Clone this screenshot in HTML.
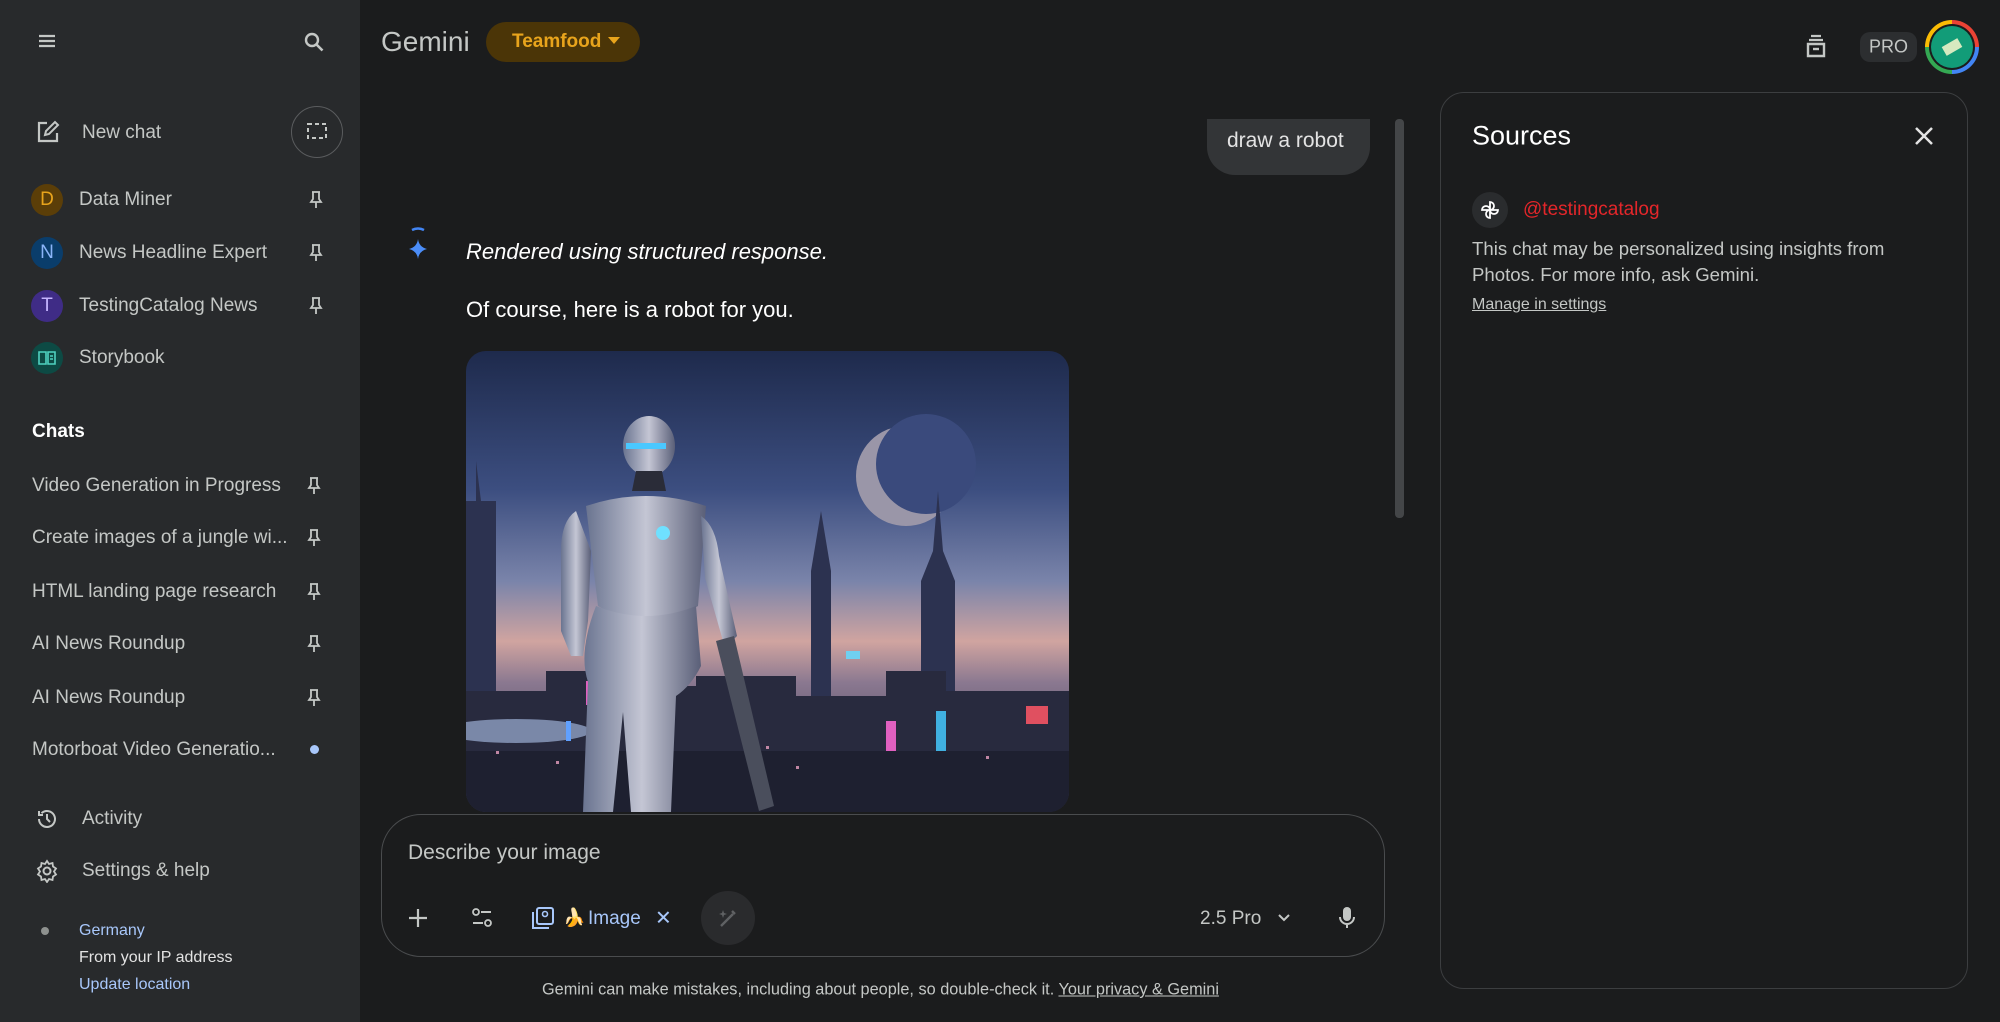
<!DOCTYPE html>
<html><head><meta charset="utf-8"><style>
*{margin:0;padding:0;box-sizing:border-box}
body{width:2000px;height:1022px;background:#1b1c1d;font-family:"Liberation Sans",sans-serif;color:#e3e3e3;position:relative;overflow:hidden}
.a{position:absolute}
.sb{left:0;top:0;width:360px;height:1022px;background:#282a2c}
.t{position:absolute;white-space:nowrap;transform:translateY(-50%)}
.av{position:absolute;width:32px;height:32px;border-radius:50%;transform:translate(-50%,-50%);display:flex;align-items:center;justify-content:center;font-size:19px}
</style></head><body>
<div class="a sb"></div>
<svg class="a" style="left:37px;top:31px" width="20" height="20" viewBox="0 0 20 20"><path d="M2 5h16M2 10h16M2 15h16" stroke="#c4c7c5" stroke-width="2.2"/></svg>
<svg class="a" style="left:302px;top:30px" width="24" height="24" viewBox="0 0 24 24"><circle cx="10" cy="10" r="6" stroke="#c4c7c5" stroke-width="2.4" fill="none"/><path d="M14.5 14.5l6 6" stroke="#c4c7c5" stroke-width="2.6"/></svg>
<svg class="a" style="left:35px;top:119px" width="26" height="26" viewBox="0 0 26 26"><path d="M12 4H4v18h18v-8" stroke="#c4c7c5" stroke-width="2.2" fill="none"/><path d="M10 16l1-4 9-9 3 3-9 9z" stroke="#c4c7c5" stroke-width="2" fill="none"/></svg>
<div class="t" style="left:82px;top:133px;font-size:19px;color:#c4c7c5">New chat</div>
<div class="a" style="left:291px;top:106px;width:52px;height:52px;border-radius:50%;border:1.5px solid #5a5c5e"></div>
<svg class="a" style="left:305px;top:120px" width="24" height="24" viewBox="0 0 24 24"><rect x="3" y="4" width="18" height="14" stroke="#c4c7c5" stroke-width="2" fill="none" stroke-dasharray="4 3"/></svg>
<div class="av" style="left:47px;top:200px;background:#5b3e08;color:#e8a41c">D</div>
<div class="t" style="left:79px;top:200px;font-size:19px;color:#c4c7c5">Data Miner</div>
<div class="av" style="left:47px;top:253px;background:#0a3d6b;color:#8ab4f8">N</div>
<div class="t" style="left:79px;top:253px;font-size:19px;color:#c4c7c5">News Headline Expert</div>
<div class="av" style="left:47px;top:306px;background:#3f2c86;color:#c5b4ff">T</div>
<div class="t" style="left:79px;top:306px;font-size:19px;color:#c4c7c5">TestingCatalog News</div>
<div class="av" style="left:47px;top:358px;background:#0d4a44"><svg width="18" height="14" viewBox="0 0 18 14"><path d="M1 1h7v12H1zM10 1h7v12h-7zM12 5h3M12 8h3" stroke="#4fd1c0" stroke-width="1.6" fill="none"/></svg></div>
<div class="t" style="left:79px;top:358px;font-size:19px;color:#c4c7c5">Storybook</div>
<div class="t" style="left:32px;top:432px;font-size:19px;color:#fff;font-weight:bold">Chats</div>
<div class="t" style="left:32px;top:486px;font-size:19px;color:#c4c7c5">Video Generation in Progress</div>
<div class="t" style="left:32px;top:538px;font-size:19px;color:#c4c7c5">Create images of a jungle wi...</div>
<div class="t" style="left:32px;top:592px;font-size:19px;color:#c4c7c5">HTML landing page research</div>
<div class="t" style="left:32px;top:644px;font-size:19px;color:#c4c7c5">AI News Roundup</div>
<div class="t" style="left:32px;top:698px;font-size:19px;color:#c4c7c5">AI News Roundup</div>
<div class="t" style="left:32px;top:750px;font-size:19px;color:#c4c7c5">Motorboat Video Generatio...</div>
<div class="a" style="left:310px;top:745px;width:9px;height:9px;border-radius:50%;background:#a8c7fa"></div>
<svg width="0" height="0" style="position:absolute"><defs><g id="pin"><path d="M4 1h8M5 1v7l-2 3h10l-2-3V1M8 11v6" stroke="#c4c7c5" stroke-width="1.8" fill="none"/></g></defs></svg>
<svg class="a" style="left:308px;top:191px" width="16" height="18"><use href="#pin"/></svg>
<svg class="a" style="left:308px;top:244px" width="16" height="18"><use href="#pin"/></svg>
<svg class="a" style="left:308px;top:297px" width="16" height="18"><use href="#pin"/></svg>
<svg class="a" style="left:306px;top:477px" width="16" height="18"><use href="#pin"/></svg>
<svg class="a" style="left:306px;top:529px" width="16" height="18"><use href="#pin"/></svg>
<svg class="a" style="left:306px;top:583px" width="16" height="18"><use href="#pin"/></svg>
<svg class="a" style="left:306px;top:635px" width="16" height="18"><use href="#pin"/></svg>
<svg class="a" style="left:306px;top:689px" width="16" height="18"><use href="#pin"/></svg>
<svg class="a" style="left:35px;top:807px" width="24" height="24" viewBox="0 0 24 24"><path d="M4 12a8 8 0 1 0 2.5-5.8M4 4v4h4M12 7v5l3 3" stroke="#c4c7c5" stroke-width="2" fill="none"/></svg>
<div class="t" style="left:82px;top:819px;font-size:19px;color:#c4c7c5">Activity</div>
<svg class="a" style="left:35px;top:859px" width="24" height="24" viewBox="0 0 24 24"><circle cx="12" cy="12" r="3.5" stroke="#c4c7c5" stroke-width="2" fill="none"/><path d="M12 2l2 3 3.5-1 .5 3.5 3 2-2 3 2 3-3 2-.5 3.5-3.5-1-2 3-2-3-3.5 1-.5-3.5-3-2 2-3-2-3 3-2 .5-3.5 3.5 1z" stroke="#c4c7c5" stroke-width="1.8" fill="none"/></svg>
<div class="t" style="left:82px;top:871px;font-size:19px;color:#c4c7c5">Settings &amp; help</div>
<div class="a" style="left:41px;top:927px;width:8px;height:8px;border-radius:50%;background:#8e918f"></div>
<div class="t" style="left:79px;top:931px;font-size:16px;color:#a8c7fa">Germany</div>
<div class="t" style="left:79px;top:958px;font-size:16px;color:#e3e3e3">From your IP address</div>
<div class="t" style="left:79px;top:985px;font-size:16px;color:#a8c7fa">Update location</div>

<div class="t" style="left:381px;top:42px;font-size:28px;color:#c4c7c5">Gemini</div>
<div class="a" style="left:486px;top:22px;width:154px;height:40px;border-radius:20px;background:#4b3507"></div>
<div class="t" style="left:512px;top:42px;font-size:19px;color:#e8a41c;font-weight:600">Teamfood</div>
<svg class="a" style="left:608px;top:37px" width="12" height="8"><path d="M0 0h12L6 7z" fill="#e8a41c"/></svg>
<svg class="a" style="left:1804px;top:34px" width="24" height="26" viewBox="0 0 24 26"><path d="M7 2h10M5 6h14" stroke="#c4c7c5" stroke-width="2.2"/><path d="M4 10h16v12H4z" stroke="#c4c7c5" stroke-width="2.4" fill="none"/><path d="M9 15h6" stroke="#c4c7c5" stroke-width="2.4"/></svg>
<div class="a" style="left:1860px;top:32px;width:57px;height:30px;border-radius:10px;background:#2c2e30"></div>
<div class="t" style="left:1869px;top:47px;font-size:18px;color:#c4c7c5">PRO</div>
<div class="a" style="left:1925px;top:20px;width:54px;height:54px;border-radius:50%;background:conic-gradient(#ea4335 0 25%,#4285f4 25% 50%,#34a853 50% 75%,#fbbc04 75% 100%)"></div>
<div class="a" style="left:1929px;top:24px;width:46px;height:46px;border-radius:50%;background:#1b1c1d"></div>
<div class="a" style="left:1931px;top:26px;width:42px;height:42px;border-radius:50%;background:#129c78"></div>
<div class="a" style="left:1943px;top:42px;width:18px;height:10px;background:#d6e9c0;transform:rotate(-30deg)"></div>

<div class="a" style="left:1207px;top:100px;width:163px;height:75px;border-radius:0 0 28px 28px;background:#333537"></div>
<div class="a" style="left:381px;top:80px;width:1030px;height:39px;background:#1b1c1d"></div>
<div class="t" style="left:1227px;top:141px;font-size:21px;color:#e3e3e3">draw a robot</div>
<div class="a" style="left:1395px;top:119px;width:9px;height:399px;border-radius:4px;background:#444648"></div>
<svg class="a" style="left:405px;top:226px" width="26" height="36" viewBox="0 0 26 36"><path d="M7 4q6-3 12 0" stroke="#4285f4" stroke-width="2.5" fill="none"/><path d="M13 13q1 8 9 10q-8 2-9 10q-1-8-9-10q8-2 9-10z" fill="#4b8df8"/></svg>
<div class="t" style="left:466px;top:252px;font-size:22px;font-style:italic;color:#fff">Rendered using structured response.</div>
<div class="t" style="left:466px;top:310px;font-size:22px;color:#fff">Of course, here is a robot for you.</div>
<svg class="a" style="left:466px;top:351px;border-radius:20px" width="603" height="461" viewBox="0 0 603 461">
<defs><linearGradient id="sky" x1="0" y1="0" x2="0" y2="1"><stop offset="0" stop-color="#1e2a4c"/><stop offset=".3" stop-color="#3c4e80"/><stop offset=".5" stop-color="#7a84aa"/><stop offset=".63" stop-color="#d0a4a0"/><stop offset=".72" stop-color="#8a7890"/><stop offset="1" stop-color="#2a2c40"/></linearGradient>
<linearGradient id="met" x1="0" y1="0" x2="1" y2="0"><stop offset="0" stop-color="#6a7490"/><stop offset=".5" stop-color="#c4c6d4"/><stop offset="1" stop-color="#5a5f78"/></linearGradient></defs>
<rect width="603" height="461" fill="url(#sky)"/>
<circle cx="440" cy="125" r="50" fill="#9a96a8"/><circle cx="460" cy="113" r="50" fill="#3a4a7c"/>
<path d="M0 461V150h10v-40l5 40h15v311zM345 461V220l10-60 10 60v241zM455 461V230l12-30 5-60 5 60 12 30v231z" fill="#2c3250"/>
<path d="M0 461V340h80v-20h60v15h90v-10h100v20h90v-25h60v20h123v161z" fill="#282a3e"/>
<path d="M0 461V400h603v61z" fill="#1e2030"/>
<ellipse cx="50" cy="380" rx="75" ry="12" fill="#7a88a8"/>
<g fill="#e8a0c0" opacity=".8"><rect x="30" y="400" width="3" height="3"/><rect x="90" y="410" width="3" height="3"/><rect x="300" y="395" width="3" height="3"/><rect x="330" y="415" width="3" height="3"/><rect x="520" y="405" width="3" height="3"/></g>
<rect x="120" y="330" width="8" height="24" fill="#e060c0"/><rect x="470" y="360" width="10" height="40" fill="#40b0e0"/><rect x="420" y="370" width="10" height="30" fill="#e060c0"/><rect x="560" y="355" width="22" height="18" fill="#e05060"/><rect x="380" y="300" width="14" height="8" fill="#70d0f0"/><rect x="100" y="370" width="5" height="20" fill="#60a0ff"/>
<ellipse cx="183" cy="95" rx="26" ry="30" fill="url(#met)"/>
<rect x="160" y="92" width="40" height="6" fill="#4ac8ff"/>
<path d="M170 120l26 0 4 20h-34z" fill="#2a2c38"/>
<path d="M120 155q60-20 120 0l-8 100q-50 30-100 0z" fill="url(#met)"/>
<circle cx="197" cy="182" r="7" fill="#6fe0ff"/>
<path d="M110 160q-15 10-15 40v80l10 25h12l5-35 3-70z" fill="url(#met)"/>
<path d="M235 165q15 10 18 40l18 80-12 12-20-70z" fill="url(#met)"/>
<path d="M130 255q50 20 100 0l5 60q-10 20-25 30l-5 116h-40l-8-100-10 100h-30l5-130q-10-30 8-76z" fill="url(#met)"/>
<path d="M250 290l18-5 40 170-15 5z" fill="#4a4e5c"/>
</svg>

<div class="a" style="left:381px;top:814px;width:1004px;height:143px;border-radius:40px;border:1.5px solid #4a4c4e;background:#1b1c1d"></div>
<div class="t" style="left:408px;top:853px;font-size:21px;color:#c4c7c5">Describe your image</div>
<svg class="a" style="left:407px;top:907px" width="22" height="22"><path d="M11 2v18M2 11h18" stroke="#c4c7c5" stroke-width="2.2"/></svg>
<svg class="a" style="left:471px;top:907px" width="22" height="22"><circle cx="5" cy="5" r="3" stroke="#c4c7c5" stroke-width="1.8" fill="none"/><path d="M10 5h10M2 16h10" stroke="#c4c7c5" stroke-width="2"/><circle cx="17" cy="16" r="3" stroke="#c4c7c5" stroke-width="1.8" fill="none"/></svg>
<svg class="a" style="left:531px;top:906px" width="24" height="24" viewBox="0 0 24 24"><rect x="6" y="2" width="16" height="16" rx="2" stroke="#a8c7fa" stroke-width="2" fill="none"/><path d="M2 6v16h16" stroke="#a8c7fa" stroke-width="2" fill="none"/><circle cx="14" cy="8" r="2.5" stroke="#a8c7fa" stroke-width="1.6" fill="none"/></svg>
<div class="t" style="left:563px;top:918px;font-size:18px">🍌</div>
<div class="t" style="left:588px;top:919px;font-size:19px;color:#a8c7fa">Image</div>
<div class="t" style="left:655px;top:918px;font-size:20px;color:#a8c7fa">✕</div>
<div class="a" style="left:701px;top:891px;width:54px;height:54px;border-radius:50%;background:#2a2b2d"></div>
<svg class="a" style="left:717px;top:907px" width="22" height="22"><path d="M4 19l12-12M15 4l3 3" stroke="#5f6163" stroke-width="2.4"/><path d="M6 3l1 3 3 1-3 1-1 3-1-3-3-1 3-1z" fill="#5f6163"/></svg>
<div class="t" style="left:1200px;top:919px;font-size:19px;color:#c4c7c5">2.5 Pro</div>
<svg class="a" style="left:1277px;top:913px" width="14" height="10"><path d="M2 2l5 5 5-5" stroke="#c4c7c5" stroke-width="2" fill="none"/></svg>
<svg class="a" style="left:1338px;top:906px" width="18" height="24" viewBox="0 0 18 24"><rect x="5" y="1" width="8" height="14" rx="4" fill="#c4c7c5"/><path d="M2 11a7 7 0 0 0 14 0M9 18v4" stroke="#c4c7c5" stroke-width="2" fill="none"/></svg>
<div class="t" style="left:542px;top:990px;font-size:16.3px;color:#c4c7c5">Gemini can make mistakes, including about people, so double-check it. <span style="text-decoration:underline">Your privacy &amp; Gemini</span></div>

<div class="a" style="left:1440px;top:92px;width:528px;height:897px;border-radius:24px;border:1.5px solid #3c3e40;background:#1b1c1d"></div>
<div class="t" style="left:1472px;top:136px;font-size:27px;color:#fff">Sources</div>
<svg class="a" style="left:1914px;top:126px" width="20" height="20"><path d="M2 2l16 16M18 2L2 18" stroke="#e3e3e3" stroke-width="2.5"/></svg>
<div class="a" style="left:1472px;top:192px;width:36px;height:36px;border-radius:50%;background:#2a2c2e"></div>
<svg class="a" style="left:1479px;top:199px" width="22" height="22" viewBox="0 0 22 22"><path d="M11 11V3a4 4 0 0 1 0 8zM11 11h8a4 4 0 0 1-8 0zM11 11v8a4 4 0 0 1 0-8zM11 11H3a4 4 0 0 1 8 0z" stroke="#fff" stroke-width="1.8" fill="none"/></svg>
<div class="t" style="left:1523px;top:210px;font-size:19px;color:#e4262a">@testingcatalog</div>
<div class="t" style="left:1472px;top:249px;font-size:18.6px;color:#c4c7c5">This chat may be personalized using insights from</div>
<div class="t" style="left:1472px;top:275px;font-size:18.6px;color:#c4c7c5">Photos. For more info, ask Gemini.</div>
<div class="t" style="left:1472px;top:305px;font-size:16px;color:#c4c7c5;text-decoration:underline">Manage in settings</div>
</body></html>
